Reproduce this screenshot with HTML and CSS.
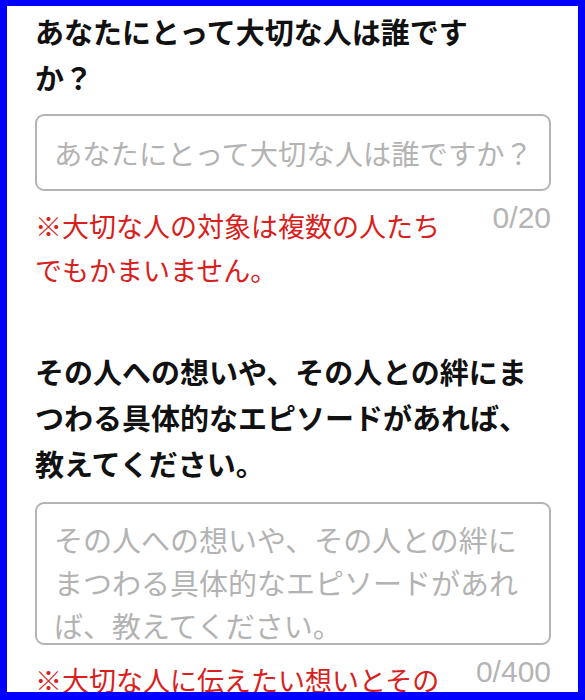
FILE: index.html
```html
<!DOCTYPE html>
<html lang="ja">
<head>
  <meta charset="UTF-8">
  <meta name="viewport" content="width=device-width, initial-scale=1.0">
  <title>大切な人</title>
  <link rel="stylesheet" href="styles.css">
</head>
<body>
  <div class="frame">
    <form class="form">
      <section class="field">
        <label class="field-title" for="person">あなたにとって大切な人は誰です<br>か？</label>
        <input type="text" id="person" class="field-input" maxlength="20" placeholder="あなたにとって大切な人は誰ですか？">
        <div class="field-foot">
          <p class="field-note">※大切な人の対象は複数の人たちでもかまいません。</p>
          <span class="field-count">0/20</span>
        </div>
      </section>

      <section class="field">
        <label class="field-title" for="episode">その人への想いや、その人との絆にまつわる具体的なエピソードがあれば、教えてください。</label>
        <textarea id="episode" class="field-input field-area" maxlength="400" placeholder="その人への想いや、その人との絆にまつわる具体的なエピソードがあれば、教えてください。"></textarea>
        <div class="field-foot">
          <p class="field-note">※大切な人に伝えたい想いとその背景を教えてください。</p>
          <span class="field-count">0/400</span>
        </div>
      </section>
    </form>
  </div>
</body>
</html>
```

FILE: styles.css
```css
html, body {
  margin: 0;
  padding: 0;
  background: #ffffff;
}

.frame {
  box-sizing: border-box;
  width: 585px;
  height: 700px;
  border-style: solid;
  border-color: #0000ff;
  border-width: 6px 7px 8px 7px;
  overflow: hidden;
  background: #ffffff;
  font-family: "Noto Sans CJK JP", "Noto Sans", sans-serif;
}

.form {
  display: flex;
  flex-direction: column;
  gap: 56px;
  padding: 2px 27px 0 28px;
}

.field {
  display: flex;
  flex-direction: column;
}

.field-title {
  display: block;
  font-size: 29px;
  line-height: 46px;
  font-weight: bold;
  color: #111111;
}

.field-input {
  box-sizing: border-box;
  width: 100%;
  height: 77px;
  margin-top: 14px;
  padding: 0 17px;
  border: 2px solid #b4b4b4;
  border-radius: 9px;
  background: #ffffff;
  font-family: "Noto Sans CJK JP", "Noto Sans", sans-serif;
  font-size: 28.3px;
  color: #333333;
  outline: none;
}

.field-area {
  height: 143px;
  margin-top: 16px;
  padding: 14px 17px 0 17px;
  font-size: 29px;
  line-height: 43px;
  resize: none;
  overflow: hidden;
}

.field-input::placeholder {
  color: #b3b3b3;
}

.field-foot {
  display: flex;
  align-items: flex-start;
  gap: 30px;
  margin-top: 13px;
}

.field-note {
  flex: 1;
  margin: 0;
  font-size: 27px;
  line-height: 44px;
  color: #d8201c;
}

.field-count {
  margin-top: -3px;
  font-family: "Liberation Sans", Arial, sans-serif;
  font-size: 30px;
  line-height: 34px;
  color: #b4b4b4;
}
```
